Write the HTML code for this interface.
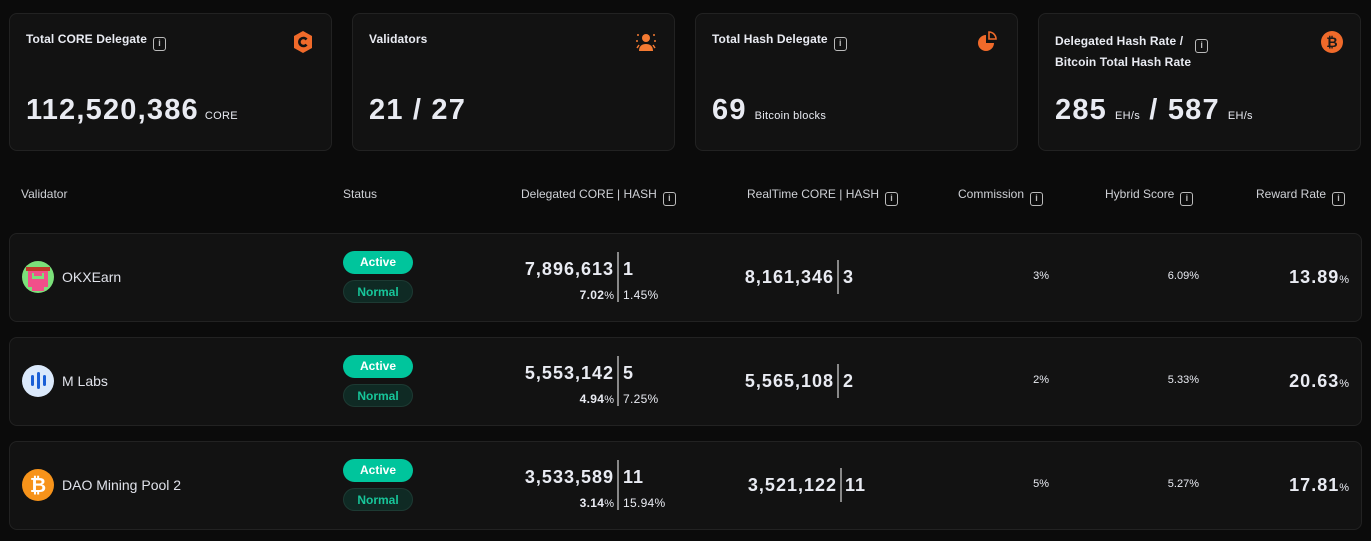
<!DOCTYPE html>
<html><head><meta charset="utf-8"><style>
*{margin:0;padding:0;box-sizing:border-box}
body{width:1371px;height:541px;background:#0b0b0b;font-family:"Liberation Sans",sans-serif;color:#e9ebf2;position:relative;overflow:hidden}
.a{position:absolute}
.card{position:absolute;background:#121212;border:1px solid #222;border-radius:8px}
.lbl{font-size:12px;font-weight:bold;color:#e9ebf2;letter-spacing:0.1px}
.i{display:inline-block;width:13px;height:14px;border:1.3px solid #bbb;border-radius:3px;font-size:9px;line-height:11px;text-align:center;color:#bbb;font-weight:bold;vertical-align:-3px;margin-left:6px;letter-spacing:0}
.big{font-size:29px;font-weight:bold;letter-spacing:1.2px}
.unit{font-size:11px;font-weight:normal;margin-left:6px;letter-spacing:0.3px}
.th{font-size:12px;color:#cfd1d6;top:187px}
.pill{position:absolute;width:70px;height:23px;border-radius:12px;font-size:12px;font-weight:bold;text-align:center;line-height:23px}
.act{background:#00c59c;color:#fff}
.nor{background:#0f2a24;color:#17c69a;border:1px solid #1d3a33}
.num{font-size:18px;font-weight:bold;letter-spacing:1px}
.sm{font-size:12px;font-weight:bold;letter-spacing:0.3px}
.bar{position:absolute;width:2px;background:#888}
.name{font-size:14px;color:#e0e2ea}
.pc{font-size:11px;font-weight:normal;letter-spacing:0}
</style></head><body>
<div class="card" style="left:9px;top:13px;width:323px;height:138px"></div>
<div class="card" style="left:352px;top:13px;width:323px;height:138px"></div>
<div class="card" style="left:695px;top:13px;width:323px;height:138px"></div>
<div class="card" style="left:1038px;top:13px;width:323px;height:138px"></div>

<div class="a lbl" style="left:26px;top:32px">Total CORE Delegate<span class="i">i</span></div>
<svg class="a" style="left:292px;top:30px" width="22" height="24" viewBox="0 0 22 24"><polygon points="11,1 20,6 20,18 11,23 2,18 2,6" fill="#f06a2a"/><path d="M14.5 9.5a4 4 0 1 0 0 5" stroke="#121212" stroke-width="2.6" fill="none"/></svg>
<div class="a big" style="left:26px;top:94px">112,520,386<span class="unit">CORE</span></div>

<div class="a lbl" style="left:369px;top:32px">Validators</div>
<svg class="a" style="left:634px;top:32px" width="24" height="20" viewBox="0 0 24 20"><circle cx="12" cy="6" r="4" fill="#f47a32"/><path d="M5 19c0-5 3-7 7-7s7 2 7 7z" fill="#f47a32"/><path d="M4 4v-2M2 9h2M20 4v-2M22 9h-2M3 16l2-3M21 16l-2-3" stroke="#f47a32" stroke-width="1.5"/></svg>
<div class="a big" style="left:369px;top:94px">21 / 27</div>

<div class="a lbl" style="left:712px;top:32px">Total Hash Delegate<span class="i">i</span></div>
<svg class="a" style="left:977px;top:31px" width="22" height="22" viewBox="0 0 22 22"><path d="M9 4a8 8 0 1 0 8 8h-8z" fill="#f06a2a"/><path d="M12 1a7 7 0 0 1 7 7h-7z" fill="none" stroke="#f06a2a" stroke-width="1.6"/></svg>
<div class="a big" style="left:712px;top:94px">69<span class="unit" style="margin-left:8px">Bitcoin blocks</span></div>

<div class="a lbl" style="left:1055px;top:32px;line-height:18px">Delegated Hash Rate /<span class="i" style="margin-left:12px">i</span><br>Bitcoin Total Hash Rate</div>
<svg class="a" style="left:1321px;top:31px" width="22" height="22" viewBox="0 0 22 22"><circle cx="11" cy="11" r="11" fill="#f06a2a"/><text x="11" y="16" font-size="14" font-weight="bold" text-anchor="middle" fill="#1a1a1a" font-family="Liberation Sans">₿</text></svg>
<div class="a big" style="left:1055px;top:94px">285<span class="unit" style="margin-left:8px">EH/s</span> / 587<span class="unit" style="margin-left:8px">EH/s</span></div>

<div class="a th" style="left:21px">Validator</div>
<div class="a th" style="left:343px">Status</div>
<div class="a th" style="left:521px">Delegated CORE | HASH<span class="i">i</span></div>
<div class="a th" style="left:747px">RealTime CORE | HASH<span class="i">i</span></div>
<div class="a th" style="left:958px">Commission<span class="i">i</span></div>
<div class="a th" style="left:1105px">Hybrid Score<span class="i">i</span></div>
<div class="a th" style="left:1256px">Reward Rate<span class="i">i</span></div>

<div class="card" style="left:9px;top:233px;width:1353px;height:89px"></div>
<div class="card" style="left:9px;top:337px;width:1353px;height:89px"></div>
<div class="card" style="left:9px;top:441px;width:1353px;height:89px"></div>

<!-- row1 -->
<svg class="a" style="left:22px;top:261px" width="32" height="32" viewBox="0 0 32 32"><circle cx="16" cy="16" r="16" fill="#7be07a"/><rect x="4" y="6" width="24" height="4" fill="#c0392b"/><rect x="6" y="10" width="20" height="16" fill="#f14f8a"/><rect x="10" y="12" width="12" height="6" fill="#7be07a"/><rect x="12" y="12" width="8" height="3" fill="#f14f8a"/><rect x="10" y="26" width="12" height="4" fill="#f14f8a"/></svg>
<div class="a name" style="left:62px;top:269px">OKXEarn</div>
<div class="pill act" style="left:343px;top:251px">Active</div>
<div class="pill nor" style="left:343px;top:280px">Normal</div>
<div class="a num" style="right:757px;top:259px">7,896,613</div>
<div class="bar" style="left:617px;top:252px;height:50px"></div>
<div class="a num" style="left:623px;top:259px">1</div>
<div class="a sm" style="right:757px;top:288px">7.02<span class="pc">%</span></div>
<div class="a sm" style="left:623px;top:288px;font-weight:normal">1.45%</div>
<div class="a num" style="right:537px;top:267px">8,161,346</div>
<div class="bar" style="left:837px;top:260px;height:34px"></div>
<div class="a num" style="left:843px;top:267px">3</div>
<div class="a" style="right:322px;top:270px;font-size:11px">3%</div>
<div class="a" style="right:172px;top:270px;font-size:11px">6.09%</div>
<div class="a num" style="right:22px;top:267px">13.89<span class="pc">%</span></div>

<!-- row2 -->
<svg class="a" style="left:22px;top:365px" width="32" height="32" viewBox="0 0 32 32"><circle cx="16" cy="16" r="16" fill="#dbe9fb"/><rect x="9" y="10" width="3" height="11" rx="1.5" fill="#1a5fd6"/><rect x="15" y="7" width="3" height="17" rx="1.5" fill="#1a5fd6"/><rect x="21" y="10" width="3" height="11" rx="1.5" fill="#1a5fd6"/></svg>
<div class="a name" style="left:62px;top:373px">M Labs</div>
<div class="pill act" style="left:343px;top:355px">Active</div>
<div class="pill nor" style="left:343px;top:384px">Normal</div>
<div class="a num" style="right:757px;top:363px">5,553,142</div>
<div class="bar" style="left:617px;top:356px;height:50px"></div>
<div class="a num" style="left:623px;top:363px">5</div>
<div class="a sm" style="right:757px;top:392px">4.94<span class="pc">%</span></div>
<div class="a sm" style="left:623px;top:392px;font-weight:normal">7.25%</div>
<div class="a num" style="right:537px;top:371px">5,565,108</div>
<div class="bar" style="left:837px;top:364px;height:34px"></div>
<div class="a num" style="left:843px;top:371px">2</div>
<div class="a" style="right:322px;top:374px;font-size:11px">2%</div>
<div class="a" style="right:172px;top:374px;font-size:11px">5.33%</div>
<div class="a num" style="right:22px;top:371px">20.63<span class="pc">%</span></div>

<!-- row3 -->
<svg class="a" style="left:22px;top:469px" width="32" height="32" viewBox="0 0 32 32"><circle cx="16" cy="16" r="16" fill="#f7931a"/><text x="16" y="23" font-size="20" font-weight="bold" text-anchor="middle" fill="#fff" font-family="Liberation Sans">₿</text></svg>
<div class="a name" style="left:62px;top:477px">DAO Mining Pool 2</div>
<div class="pill act" style="left:343px;top:459px">Active</div>
<div class="pill nor" style="left:343px;top:488px">Normal</div>
<div class="a num" style="right:757px;top:467px">3,533,589</div>
<div class="bar" style="left:617px;top:460px;height:50px"></div>
<div class="a num" style="left:623px;top:467px">11</div>
<div class="a sm" style="right:757px;top:496px">3.14<span class="pc">%</span></div>
<div class="a sm" style="left:623px;top:496px;font-weight:normal">15.94%</div>
<div class="a num" style="right:534px;top:475px">3,521,122</div>
<div class="bar" style="left:840px;top:468px;height:34px"></div>
<div class="a num" style="left:845px;top:475px">11</div>
<div class="a" style="right:322px;top:478px;font-size:11px">5%</div>
<div class="a" style="right:172px;top:478px;font-size:11px">5.27%</div>
<div class="a num" style="right:22px;top:475px">17.81<span class="pc">%</span></div>
</body></html>
